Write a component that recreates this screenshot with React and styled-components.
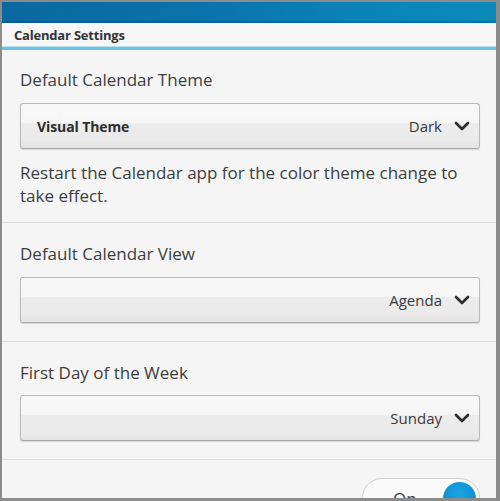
import React from 'react';
import styled, { createGlobalStyle } from 'styled-components';

const GlobalStyle = createGlobalStyle`
  html, body {
    margin: 0;
    padding: 0;
    background: #8c8c8c;
  }
  body {
    font-family: "Open Sans", "Liberation Sans", sans-serif;
    color: #3b3b3b;
  }
`;

const Frame = styled.div`
  box-sizing: border-box;
  width: 500px;
  height: 501px;
  border-style: solid;
  border-color: #8c8c8c;
  border-width: 2px 4px 3px 2px;
  overflow: hidden;
  display: flex;
  flex-direction: column;
  background: #f5f5f5;
`;

const StatusBar = styled.div`
  height: 21px;
  flex-shrink: 0;
  background: linear-gradient(90deg, #0b68a0 0%, #0a72aa 40%, #0a83b7 70%, #0a8aba 100%);
  box-shadow: inset 0 -2px 0 rgba(0, 60, 100, 0.25);
`;

const TitleBar = styled.div`
  height: 24px;
  flex-shrink: 0;
  display: flex;
  align-items: center;
  padding-left: 12px;
  background: #f7f7f8;
  border-bottom: 3px solid #6cc2e4;
  box-shadow: inset 0 -1px 0 #b7e1f1;
  font-size: 13px;
  font-weight: 700;
  color: #333;
  letter-spacing: -0.2px;
`;

const Section = styled.section`
  padding: ${p => p.$top}px 16px ${p => p.$bottom}px 18px;
  border-bottom: ${p => (p.$last ? 'none' : '1px solid #dcdcdc')};
`;

const Label = styled.div`
  font-size: 17px;
  line-height: 22px;
  color: #3d3d3d;
`;

const Dropdown = styled.div`
  box-sizing: border-box;
  height: 46px;
  margin-top: ${p => p.$gap}px;
  display: flex;
  align-items: center;
  padding: 0 9px 0 16px;
  border: 1px solid #b9b9b9;
  border-bottom-color: #a9a9a9;
  border-radius: 3px;
  background: linear-gradient(180deg, #f8f8f8 0%, #f6f6f6 42%, #ececec 44%, #ebebeb 82%, #e4e4e4 100%);
  box-shadow: 0 1px 1px rgba(0, 0, 0, 0.12);
`;

const DropdownTitle = styled.span`
  font-size: 14px;
  font-weight: 700;
  color: #2e2e2e;
  letter-spacing: -0.1px;
  flex: 1;
`;

const DropdownValue = styled.span`
  font-size: 15px;
  color: #3a3a3a;
  margin-right: 12px;
`;

const Chevron = styled.svg`
  width: 16px;
  height: 10px;
  flex-shrink: 0;
`;

const Note = styled.p`
  margin: 12px 0 0;
  font-size: 17px;
  line-height: 23px;
  color: #3d3d3d;
`;

const ToggleRow = styled.div`
  display: flex;
  align-items: flex-start;
  justify-content: space-between;
`;

const ToggleLabel = styled(Label)`
  margin-top: 22px;
`;

const Toggle = styled.div`
  box-sizing: border-box;
  width: 118px;
  height: 40px;
  border: 1px solid #cfcfcf;
  border-radius: 20px;
  background: #fbfbfb;
  display: flex;
  align-items: center;
  padding: 0 3px 0 30px;
`;

const ToggleText = styled.span`
  flex: 1;
  font-size: 17px;
  color: #3d3d3d;
`;

const Knob = styled.div`
  width: 33px;
  height: 33px;
  border-radius: 50%;
  background: radial-gradient(circle at 50% 35%, #1ca3df, #0b8fd0 70%);
`;

const ChevronIcon = () => (
  <Chevron viewBox="0 0 16 10">
    <path d="M2 2 L8 8 L14 2" fill="none" stroke="#2b2b2b" strokeWidth="2.6" strokeLinecap="round" strokeLinejoin="round" />
  </Chevron>
);

const Select = ({ title, value, gap }) => (
  <Dropdown $gap={gap}>
    <DropdownTitle>{title}</DropdownTitle>
    <DropdownValue>{value}</DropdownValue>
    <ChevronIcon />
  </Dropdown>
);

export default function App() {
  return (
    <>
      <GlobalStyle />
      <Frame>
        <StatusBar />
        <TitleBar>Calendar Settings</TitleBar>

        <Section $top={19} $bottom={15}>
          <Label>Default Calendar Theme</Label>
          <Select title="Visual Theme" value="Dark" gap={12} />
          <Note>Restart the Calendar app for the color theme change to take effect.</Note>
        </Section>

        <Section $top={20} $bottom={18}>
          <Label>Default Calendar View</Label>
          <Select value="Agenda" gap={12} />
        </Section>

        <Section $top={20} $bottom={18}>
          <Label>First Day of the Week</Label>
          <Select value="Sunday" gap={11} />
        </Section>

        <Section $top={18} $bottom={0} $last>
          <ToggleRow>
            <ToggleLabel>Display Week Numbers</ToggleLabel>
            <Toggle>
              <ToggleText>On</ToggleText>
              <Knob />
            </Toggle>
          </ToggleRow>
        </Section>
      </Frame>
    </>
  );
}
